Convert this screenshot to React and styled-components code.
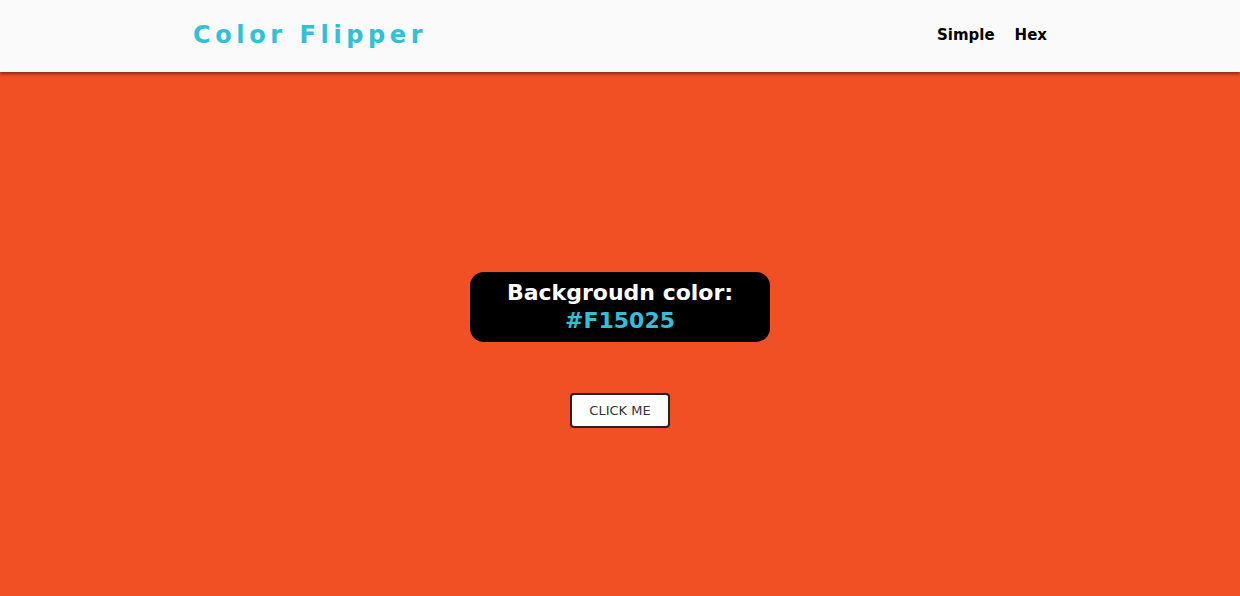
import React, { useState } from 'react'
import styled, { createGlobalStyle } from 'styled-components'

const GlobalStyle = createGlobalStyle`
  * { box-sizing: border-box; }
  html, body { margin: 0; padding: 0; }
  body {
    font-family: "DejaVu Sans", "Liberation Sans", sans-serif;
    background: #f15025;
  }
`

function App() {
  const [color] = useState('#F15025')
  return (
    <>
      <GlobalStyle />
      <Nav>
        <NavCenter>
          <Logo>Color Flipper</Logo>
          <Links>
            <li><a href="#">Simple</a></li>
            <li><a href="#">Hex</a></li>
          </Links>
        </NavCenter>
      </Nav>
      <Main $bg={color}>
        <ColorBox>
          Backgroudn color:
          <ColorValue>{color}</ColorValue>
        </ColorBox>
        <FlipButton>CLICK ME</FlipButton>
      </Main>
    </>
  )
}

export default App

const Nav = styled.nav`
  height: 72px;
  background: #fafafa;
  box-shadow: 0 2px 3px rgba(0, 0, 0, 0.45);
  display: flex;
  align-items: center;
  position: relative;
  z-index: 2;
`
const NavCenter = styled.div`
  width: 100%;
  max-width: 854px;
  margin: 0 auto;
  padding-bottom: 3px;
  display: flex;
  justify-content: space-between;
  align-items: center;
`
const Logo = styled.h4`
  margin: 0;
  color: #31c0d7;
  font-size: 24px;
  font-weight: 700;
  letter-spacing: 4.6px;
`
const Links = styled.ul`
  list-style: none;
  margin: 0;
  padding: 0;
  display: flex;
  gap: 20px;
  a {
    color: #000;
    text-decoration: none;
    font-weight: 700;
    font-size: 15px;
  }
`
const Main = styled.main`
  min-height: calc(100vh - 72px);
  background: ${p => p.$bg};
  display: flex;
  flex-direction: column;
  align-items: center;
  padding-top: 200px;
`
const ColorBox = styled.h2`
  margin: 0;
  width: 300px;
  height: 70px;
  background: #000;
  color: #fff;
  border-radius: 14px;
  display: flex;
  flex-direction: column;
  align-items: center;
  justify-content: center;
  font-size: 22px;
  line-height: 28px;
  font-weight: 700;
`
const ColorValue = styled.span`
  color: #31c0d7;
`
const FlipButton = styled.button`
  margin-top: 51px;
  width: 100px;
  height: 35px;
  background: #fff;
  border: 2px solid #222;
  border-radius: 4px;
  font-family: "DejaVu Sans", "Liberation Sans", sans-serif;
  font-size: 13px;
  color: #333;
  cursor: pointer;
`
